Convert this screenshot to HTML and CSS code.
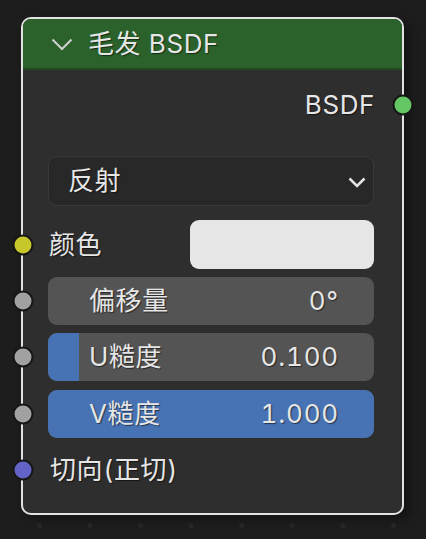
FILE: index.html
```html
<!DOCTYPE html>
<html lang="zh">
<head>
<meta charset="utf-8">
<title>毛发 BSDF</title>
<link rel="stylesheet" href="styles.css">
</head>
<body>
<div class="node">
  <div class="node-header">
    <svg class="hdr-chevron" width="22" height="13" viewBox="0 0 22 13"><polyline points="1.5,1.5 11,11 20.5,1.5" fill="none" stroke="#cfcfcf" stroke-width="2"/></svg>
    <span class="title">毛发 BSDF</span>
  </div>
  <div class="node-body">
    <div class="out-row">
      <span class="label">BSDF</span>
      <span class="socket socket-right sock-green"></span>
    </div>
    <div class="dropdown">
      <span class="label">反射</span>
      <svg class="dd-chevron" width="18" height="11" viewBox="0 0 18 11"><polyline points="1.5,1.5 9,9 16.5,1.5" fill="none" stroke="#e2e2e2" stroke-width="2.6"/></svg>
    </div>
    <div class="color-row">
      <span class="socket socket-left sock-yellow"></span>
      <span class="label">颜色</span>
      <span class="swatch"></span>
    </div>
    <div class="slider">
      <span class="socket socket-left sock-grey"></span>
      <span class="fill" style="width:0%"></span>
      <span class="label">偏移量</span>
      <span class="value">0°</span>
    </div>
    <div class="slider">
      <span class="socket socket-left sock-grey"></span>
      <span class="fill" style="width:9.5%"></span>
      <span class="label">U糙度</span>
      <span class="value">0.100</span>
    </div>
    <div class="slider slider-v">
      <span class="socket socket-left sock-grey"></span>
      <span class="fill" style="width:100%"></span>
      <span class="label">V糙度</span>
      <span class="value">1.000</span>
    </div>
    <div class="in-row">
      <span class="socket socket-left sock-purple"></span>
      <span class="label">切向(正切)</span>
    </div>
  </div>
</div>
</body>
</html>
```
FILE: styles.css
```css
html, body {
  margin: 0;
  padding: 0;
}
body {
  width: 426px;
  height: 539px;
  overflow: hidden;
  background-color: #1d1d1d;
  background-image: radial-gradient(circle, #272727 0, #272727 2.2px, transparent 2.8px);
  background-size: 50.6px 50.6px;
  background-position: 14px 45px;
  font-family: Inter, "Noto Sans CJK SC", "DejaVu Sans", sans-serif;
  font-variant-numeric: tabular-nums;
  color: #e6e6e6;
  padding: 17px 0 0 21px;
  box-sizing: border-box;
}
.node {
  width: 383px;
  box-sizing: border-box;
  border: 2px solid #e2e2e2;
  border-radius: 10px;
  background: #2e2e2e;
  box-shadow: 6px 4px 10px rgba(0,0,0,0.35);
  position: relative;
}
.node-header {
  height: 49px;
  background: #2b622b;
  border-bottom: 2px solid #214a21;
  border-radius: 8px 8px 0 0;
  display: flex;
  align-items: center;
  padding-left: 28px;
}
.hdr-chevron {
  flex: none;
  margin-top: 1px;
}
.title {
  margin-left: 15px;
  font-size: 26px;
  letter-spacing: 0.6px;
  text-shadow: 1px 1px 1px rgba(0,0,0,0.55);
  line-height: 1;
}
.label, .value {
  font-size: 26px;
  line-height: 1;
  letter-spacing: 0.6px;
  text-shadow: 1px 1px 1px rgba(0,0,0,0.55);
  white-space: nowrap;
}
.value {
  letter-spacing: 0.8px;
}
.node-body {
  padding: 0 28px 19px 25px;
  display: flex;
  flex-direction: column;
}
.out-row {
  margin-top: 7px;
  height: 56px;
  display: flex;
  align-items: center;
  justify-content: flex-end;
  position: relative;
}
.out-row .label {
  margin-right: -1px;
}
.socket {
  position: absolute;
  width: 17px;
  height: 17px;
  border-radius: 50%;
  border: 2px solid #161616;
  top: 50%;
  transform: translate(-50%, -50%);
}
.socket-right {
  left: calc(100% + 29px);
}
.socket-left {
  left: -25px;
}
.sock-green { background: #63c763; }
.sock-yellow { background: #c7c729; }
.sock-grey { background: #a1a1a1; }
.sock-purple { background: #6363c7; }
.dropdown {
  margin-top: 23px;
  height: 50px;
  box-sizing: border-box;
  background: #282828;
  border: 1px solid #393939;
  border-radius: 9px;
  display: flex;
  align-items: center;
  justify-content: space-between;
  padding: 0 7px 0 19px;
}
.dd-chevron {
  flex: none;
  margin-top: 2px;
}
.color-row {
  margin-top: 14px;
  height: 49px;
  display: flex;
  align-items: center;
  justify-content: space-between;
  position: relative;
}
.color-row .label {
  margin-left: 1px;
}
.swatch {
  width: 184px;
  height: 49px;
  background: #e6e6e6;
  border-radius: 9px;
}
.slider {
  margin-top: 8px;
  height: 48px;
  background: #545454;
  border-radius: 9px;
  display: flex;
  align-items: center;
  justify-content: space-between;
  padding: 0 35px 0 41px;
  position: relative;
}
.slider-v {
  margin-top: 9px;
}
.fill {
  position: absolute;
  left: 0;
  top: 0;
  bottom: 0;
  background: #4772b3;
  border-radius: 9px 0 0 9px;
}
.slider-v .fill {
  border-radius: 9px;
}
.slider .label, .slider .value {
  position: relative;
}
.in-row {
  margin-top: 8px;
  height: 48px;
  display: flex;
  align-items: center;
  position: relative;
}
.in-row .label {
  margin-left: 2px;
}
```
